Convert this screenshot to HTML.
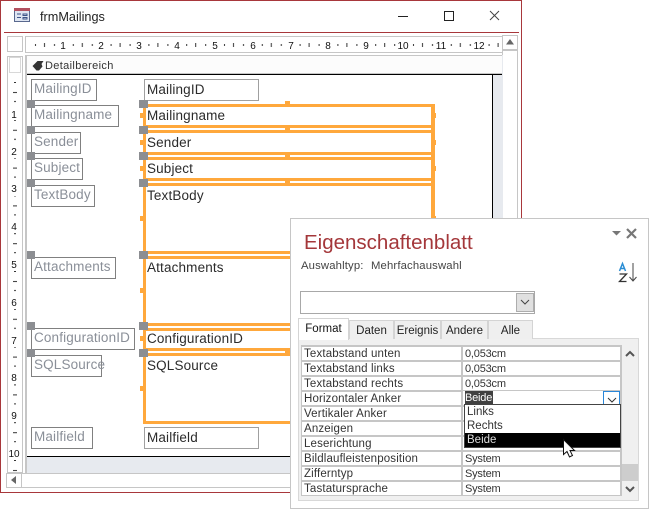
<!DOCTYPE html>
<html><head><meta charset="utf-8"><style>
html,body{margin:0;padding:0;background:#fff}
#r{position:relative;width:650px;height:509px;overflow:hidden;background:#fff;font-family:"Liberation Sans",sans-serif}
#r div{position:absolute;box-sizing:border-box}
.t{white-space:nowrap;line-height:16px}
.lb{border:1px solid #808080;left:31px;height:22px;color:#8a8f98;font-size:13.5px;letter-spacing:.15px;padding-left:2px;line-height:17px;white-space:nowrap;background:#fff}
.tb{color:#2b2b2b;font-size:13.5px;letter-spacing:.15px;left:147px;white-space:nowrap;line-height:17px}
.g{background:#8c8e92;width:8px;height:8px;left:27px}
.g2{background:#8c8e92;width:9px;height:8px;left:139px}
.o{background:#ffa83c}
.h{left:144px;width:291px;height:3px;background:#ffa83c}
.sl{left:140px;width:4px;height:5px;background:#ffa83c}
.tm{left:285px;width:5px;height:3px;background:#ffa83c}
.sr{left:433px;width:3px;height:5px;background:#ffa83c}
.rn{left:302px;width:159px;height:13px;background:#fff;font-size:11.5px;letter-spacing:.15px;color:#333;line-height:15px;padding-left:2px;white-space:nowrap;overflow:hidden}
.rv{left:463px;width:157px;height:13px;background:#fff;font-size:11px;letter-spacing:-.2px;color:#333;line-height:15px;padding-left:2px;white-space:nowrap;overflow:hidden}
.tab{top:320px;height:19px;background:#efefef;border:1px solid #d4d4d4;border-bottom:0;font-size:11.5px;color:#222;text-align:center;line-height:20px;white-space:nowrap}
</style></head><body><div id="r">

<!-- window frame -->
<div style="left:0;top:0;width:522px;height:493px;border:1px solid #a8373b;background:#fff"></div>
<div style="left:4px;top:32px;width:515px;height:1px;background:#a8373b"></div>
<svg style="position:absolute;left:13px;top:7px" width="18" height="17"><rect x="1.5" y="1.5" width="15" height="13" fill="#dfe6f2" stroke="#59688e"/><rect x="1" y="1" width="16" height="3" fill="#b2505f"/><path d="M4 7h4M4 10.500h4M10 7h4v1.500h-4zM10 10.500h4v1.500h-4z" stroke="#3d5488" fill="none"/></svg>
<div class="t" style="left:40px;top:9px;font-size:12.700px;color:#222">frmMailings</div>
<svg style="position:absolute;left:390px;top:8px" width="120" height="18" fill="none" stroke="#222"><path d="M8 8.500H18"/><rect x="54.500" y="3.500" width="9" height="9"/><path d="M100 3l9 9M109 3l-9 9" stroke="#444"/></svg>

<!-- ruler top -->
<div style="left:7px;top:36px;width:16px;height:16px;border:1px solid #c6c6c6"></div>
<div style="left:25px;top:36px;width:478px;height:17px;border:1px solid #c6c6c6;border-right:0;background:#fff"></div>
<svg style="position:absolute;left:26px;top:37px" width="476" height="15">
<defs><pattern id="hp" x="0" y="0" width="37.8" height="15" patternUnits="userSpaceOnUse"><rect x="9" y="7" width="1" height="2" fill="#333"/><rect x="18" y="6" width="1" height="4" fill="#333"/><rect x="28" y="7" width="1" height="2" fill="#333"/></pattern></defs>
<rect width="476" height="15" fill="url(#hp)"/>
<g font-family="Liberation Sans,sans-serif" font-size="10" fill="#111" text-anchor="middle">
<rect x="31" y="0" width="12" height="15" fill="#fff"/><text x="37" y="12">1</text>
<rect x="69" y="0" width="12" height="15" fill="#fff"/><text x="75" y="12">2</text>
<rect x="107" y="0" width="12" height="15" fill="#fff"/><text x="113" y="12">3</text>
<rect x="145" y="0" width="12" height="15" fill="#fff"/><text x="151" y="12">4</text>
<rect x="183" y="0" width="12" height="15" fill="#fff"/><text x="189" y="12">5</text>
<rect x="221" y="0" width="12" height="15" fill="#fff"/><text x="227" y="12">6</text>
<rect x="259" y="0" width="12" height="15" fill="#fff"/><text x="265" y="12">7</text>
<rect x="296" y="0" width="12" height="15" fill="#fff"/><text x="302" y="12">8</text>
<rect x="334" y="0" width="12" height="15" fill="#fff"/><text x="340" y="12">9</text>
<rect x="370" y="0" width="14" height="15" fill="#fff"/><text x="377" y="12">10</text>
<rect x="408" y="0" width="14" height="15" fill="#fff"/><text x="415" y="12">11</text>
<rect x="446" y="0" width="14" height="15" fill="#fff"/><text x="453" y="12">12</text>
</g></svg>

<!-- vertical scrollbar -->
<div style="left:502px;top:35px;width:16px;height:440px;border:1px solid #c6c6c6;background:#fff"></div>
<div style="left:503px;top:49px;width:14px;height:2px;background:#c6c6c6"></div>
<svg style="position:absolute;left:505px;top:38px" width="10" height="8"><path d="M1 6.500H9L5 1z" fill="#666"/></svg>

<!-- left ruler -->
<div style="left:7px;top:56px;width:16px;height:417px;border:1px solid #c6c6c6"></div>
<div style="left:9px;top:57px;width:12px;height:16px;border:1px solid #d8d8d8;background:#fff"></div>
<svg style="position:absolute;left:8px;top:74px" width="14" height="398">
<defs><pattern id="vp" x="0" y="8" width="14" height="37.8" patternUnits="userSpaceOnUse"><rect x="6" y="0" width="2" height="1" fill="#333"/><rect x="5" y="10" width="4" height="1" fill="#333"/><rect x="6" y="19" width="2" height="1" fill="#333"/></pattern></defs>
<rect width="14" height="398" fill="url(#vp)"/>
<g font-family="Liberation Sans,sans-serif" font-size="10" fill="#111" text-anchor="middle">
<rect y="33" width="14" height="13" fill="#fff"/><text x="6" y="44">1</text>
<rect y="71" width="14" height="13" fill="#fff"/><text x="6" y="81">2</text>
<rect y="109" width="14" height="13" fill="#fff"/><text x="6" y="118">3</text>
<rect y="146" width="14" height="13" fill="#fff"/><text x="6" y="156">4</text>
<rect y="184" width="14" height="13" fill="#fff"/><text x="6" y="194">5</text>
<rect y="222" width="14" height="13" fill="#fff"/><text x="6" y="232">6</text>
<rect y="260" width="14" height="13" fill="#fff"/><text x="6" y="270">7</text>
<rect y="297" width="14" height="13" fill="#fff"/><text x="6" y="307">8</text>
<rect y="335" width="14" height="13" fill="#fff"/><text x="6" y="345">9</text>
<rect y="373" width="14" height="13" fill="#fff"/><text x="6" y="383">10</text>
</g></svg>

<!-- form area -->
<div style="left:25px;top:55px;width:478px;height:418px;border-left:2px solid #c6c6c6;background:#e7eaef"></div>
<div style="left:27px;top:55px;width:475px;height:19px;background:#fcfcfc;border-top:1px solid #c6c6c6;border-bottom:1px solid #c6c6c6"></div>
<div style="left:27px;top:75px;width:466px;height:382px;background:#fff;border-right:1px solid #000;border-bottom:1px solid #000"></div>
<div style="left:27px;top:74px;width:475px;height:1px;background:#000"></div>
<svg style="position:absolute;left:32px;top:60px" width="12" height="11"><path d="M0.500 6L5.500 1h6L9.500 4l1 2.500-3.500 4H4.500z" fill="#333"/></svg>
<div class="t" style="left:45px;top:58px;font-size:11px;color:#333;letter-spacing:.35px">Detailbereich</div>

<!-- horizontal scrollbar -->
<div style="left:6px;top:473px;width:496px;height:15px;border:1px solid #c6c6c6;background:#fff"></div>
<div style="left:21px;top:474px;width:1px;height:13px;background:#c6c6c6"></div>
<svg style="position:absolute;left:10px;top:475px" width="8" height="10"><path d="M6 1V9L1 5z" fill="#666"/></svg>

<!-- labels -->
<div class="lb" style="top:79px;width:66px">MailingID</div>
<div class="lb" style="top:105px;width:88px">Mailingname</div>
<div class="lb" style="top:132px;width:50px">Sender</div>
<div class="lb" style="top:158px;width:52px">Subject</div>
<div class="lb" style="top:185px;width:64px">TextBody</div>
<div class="lb" style="top:257px;width:85px">Attachments</div>
<div class="lb" style="top:328px;width:104px">ConfigurationID</div>
<div class="lb" style="top:355px;width:71px">SQLSource</div>
<div class="lb" style="top:427px;width:62px">Mailfield</div>

<!-- text boxes -->
<div style="left:144px;top:79px;width:115px;height:22px;border:1px solid #a0a0a0"></div>
<div style="left:144px;top:427px;width:115px;height:22px;border:1px solid #a0a0a0"></div>
<div class="tb" style="top:81px">MailingID</div>
<div class="tb" style="top:107px">Mailingname</div>
<div class="tb" style="top:134px">Sender</div>
<div class="tb" style="top:160px">Subject</div>
<div class="tb" style="top:187px">TextBody</div>
<div class="tb" style="top:259px">Attachments</div>
<div class="tb" style="top:330px">ConfigurationID</div>
<div class="tb" style="top:357px">SQLSource</div>
<div class="tb" style="top:429px">Mailfield</div>

<!-- orange selection -->
<div class="o" style="left:143px;top:104px;width:3px;height:320px"></div>
<div class="o" style="left:431px;top:104px;width:4px;height:320px"></div>
<div class="h" style="top:104px"></div><div class="h" style="top:125px"></div>
<div class="h" style="top:130px"></div><div class="h" style="top:152px"></div>
<div class="h" style="top:157px"></div><div class="h" style="top:178px"></div>
<div class="h" style="top:183px"></div><div class="h" style="top:251px"></div>
<div class="h" style="top:256px"></div><div class="h" style="top:323px"></div>
<div class="h" style="top:328px"></div><div class="h" style="top:348px"></div>
<div class="h" style="top:353px"></div><div class="h" style="top:421px"></div>
<div class="tm" style="top:101px"></div><div class="tm" style="top:128px"></div>
<div class="tm" style="top:155px"></div><div class="tm" style="top:181px"></div>
<div class="tm" style="top:323px"></div><div class="tm" style="top:351px"></div>
<div class="sl" style="top:113px"></div><div class="sl" style="top:140px"></div>
<div class="sl" style="top:166px"></div><div class="sl" style="top:216px"></div>
<div class="sl" style="top:288px"></div><div class="sl" style="top:336px"></div>
<div class="sl" style="top:386px"></div>
<div class="sr" style="top:113px"></div><div class="sr" style="top:140px"></div>
<div class="sr" style="top:166px"></div><div class="sr" style="top:216px"></div>

<!-- grey handles -->
<div class="g" style="top:100px"></div><div class="g" style="top:126px"></div><div class="g" style="top:152px"></div><div class="g" style="top:179px"></div><div class="g" style="top:251px"></div><div class="g" style="top:322px"></div><div class="g" style="top:349px"></div>
<div class="g2" style="top:100px"></div><div class="g2" style="top:126px"></div><div class="g2" style="top:152px"></div><div class="g2" style="top:179px"></div><div class="g2" style="top:251px"></div><div class="g2" style="top:322px"></div><div class="g2" style="top:349px"></div>

<!-- property sheet -->
<div style="left:290px;top:218px;width:359px;height:291px;background:#fff;border:1px solid #c6c6c6"></div>
<div class="t" style="left:304px;top:231px;font-size:20.500px;line-height:24px;color:#a4373a">Eigenschaftenblatt</div>
<div class="t" style="left:301px;top:258px;font-size:11.300px;letter-spacing:.15px;color:#444">Auswahltyp:</div>
<div class="t" style="left:371px;top:258px;font-size:11.300px;letter-spacing:.15px;color:#444">Mehrfachauswahl</div>
<svg style="position:absolute;left:610px;top:226px" width="34" height="16"><path d="M2 5h9L6.500 9.500z" fill="#777"/><path d="M17 3l9 9M26 3l-9 9" stroke="#777" stroke-width="2.200" fill="none"/></svg>
<svg style="position:absolute;left:618px;top:260px" width="26" height="24" fill="none"><path d="M1.500 11L4.500 3.500 7.500 11M2.500 8.500h4" stroke="#2a8dd4" stroke-width="1.500"/><path d="M1.500 14h7L1.500 21.500h7" stroke="#333" stroke-width="1.300"/><path d="M15 3V21M11.500 17l3.500 4 3.500-4" stroke="#444"/></svg>

<div style="left:300px;top:291px;width:235px;height:23px;border:1px solid #a8a8a8;background:#fff"></div>
<div style="left:516px;top:293px;width:18px;height:19px;background:#e0e0e0;border:1px solid #adadad"></div>
<svg style="position:absolute;left:520px;top:299px" width="10" height="7"><path d="M1 1l4 4 4-4" stroke="#444" fill="none"/></svg>

<div style="left:298px;top:338px;width:341px;height:163px;border:1px solid #d8d8d8;background:#f0f0f0"></div>
<div class="tab" style="left:349px;width:45px">Daten</div>
<div class="tab" style="left:394px;width:47px">Ereignis</div>
<div class="tab" style="left:441px;width:47px">Andere</div>
<div class="tab" style="left:488px;width:45px">Alle</div>
<div class="tab" style="left:298px;top:318px;width:51px;height:22px;background:#fff;color:#111;line-height:20px">Format</div>

<div style="left:301px;top:345px;width:321px;height:151px;background:#c6c6c6"></div>
<div class="rn" style="top:347px">Textabstand unten</div><div class="rv" style="top:347px">0,053cm</div>
<div class="rn" style="top:362px">Textabstand links</div><div class="rv" style="top:362px">0,053cm</div>
<div class="rn" style="top:377px">Textabstand rechts</div><div class="rv" style="top:377px">0,053cm</div>
<div class="rn" style="top:392px">Horizontaler Anker</div><div class="rv" style="top:391px;height:14px"></div>
<div class="rn" style="top:407px">Vertikaler Anker</div><div class="rv" style="top:407px"></div>
<div class="rn" style="top:422px">Anzeigen</div><div class="rv" style="top:422px"></div>
<div class="rn" style="top:437px">Leserichtung</div><div class="rv" style="top:437px"></div>
<div class="rn" style="top:452px">Bildlaufleistenposition</div><div class="rv" style="top:452px">System</div>
<div class="rn" style="top:467px">Zifferntyp</div><div class="rv" style="top:467px">System</div>
<div class="rn" style="top:482px">Tastatursprache</div><div class="rv" style="top:482px">System</div>

<div class="t" style="left:465px;top:391px;width:28px;height:13px;background:#404040;color:#fff;font-size:11px;letter-spacing:-.2px;line-height:15px;overflow:hidden">Beide</div>
<div style="left:603px;top:391px;width:17px;height:14px;border:1px solid #2a86d8;background:#fff"></div>
<svg style="position:absolute;left:607px;top:397px" width="10" height="7"><path d="M1 1l4 4 4-4" stroke="#333" fill="none"/></svg>

<div style="left:464px;top:404px;width:157px;height:44px;background:#fff;border:1px solid #444"></div>
<div class="t" style="left:467px;top:405px;font-size:11.500px;line-height:15px;color:#333">Links</div>
<div class="t" style="left:467px;top:419px;font-size:11.500px;line-height:15px;color:#333">Rechts</div>
<div class="t" style="left:465px;top:433px;width:155px;height:14px;background:#000;color:#ddd;font-size:11.500px;line-height:15px;padding-left:2px">Beide</div>

<!-- panel scrollbar -->
<div style="left:622px;top:345px;width:16px;height:155px;background:#f0f0f0"></div>
<div style="left:622px;top:464px;width:16px;height:17px;background:#cdcdcd"></div>
<svg style="position:absolute;left:625px;top:350px" width="10" height="8"><path d="M1 6l4-4 4 4" stroke="#555" stroke-width="2" fill="none"/></svg>
<svg style="position:absolute;left:625px;top:485px" width="10" height="8"><path d="M1 2l4 4 4-4" stroke="#555" stroke-width="2" fill="none"/></svg>

<!-- cursor -->
<svg style="position:absolute;left:561px;top:438px" width="16" height="21"><path d="M2.500 1.500V16.500L6 13.500 8.500 19 11.500 17.500 9 12.500H13.500z" fill="#fff" stroke="#111"/></svg>
</div></body></html>
